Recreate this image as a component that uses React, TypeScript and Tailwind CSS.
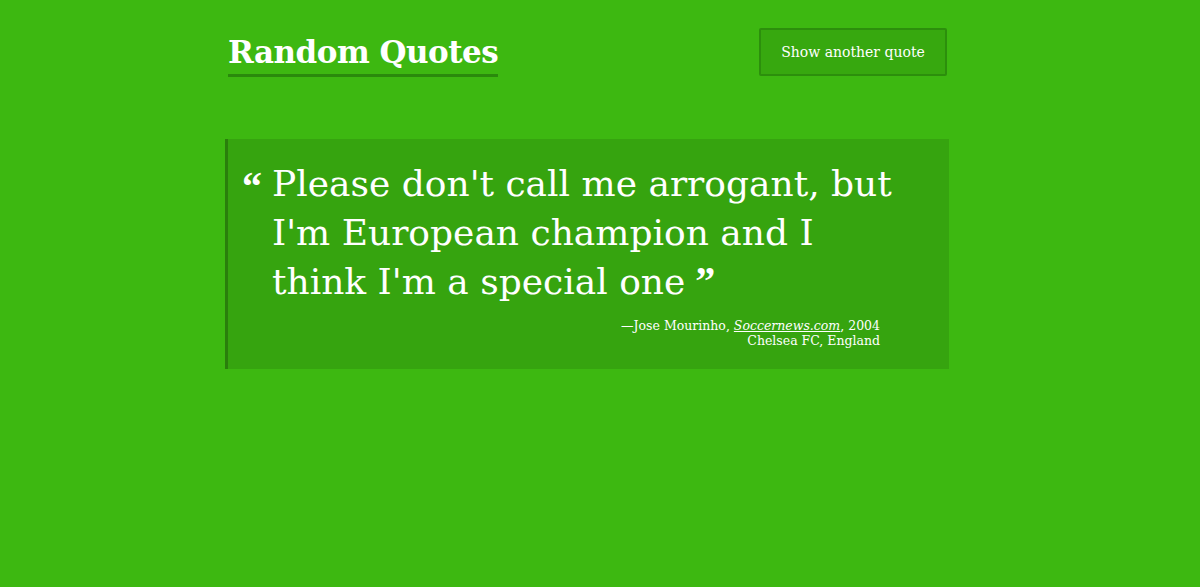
export default function App() {
    return (
        <div
            className="min-h-[587px] w-full bg-[#3db811] text-white"
            style={{ fontFamily: '"DejaVu Serif", "Liberation Serif", serif' }}
        >
            <div className="mx-auto w-[750px] pt-[28px]">

                <header className="flex w-[722px] items-start justify-between pl-[3px]">
                    <h1 className="mt-[5px] border-b-[3px] border-[#2a8a0c] pb-[3px] text-[31px] font-bold leading-[38px] tracking-[-0.5px]">
                        Random Quotes
                    </h1>

                    <button className="h-[48px] w-[188px] rounded-[2px] border-2 border-[#2c8f0c] bg-[#37a80f] text-[14px] text-white">
                        Show another quote
                    </button>
                </header>

                <blockquote className="mt-[62px] w-[724px] border-l-[3px] border-[#2a7f0c] bg-[#36a40f] pb-[21px] pl-[14px] pr-[44px] pt-[20px]">
                    <div className="flex">
                        <span className="mr-[10px] mt-[8px] font-['Liberation_Serif',serif] text-[40px] font-bold leading-[40px]">
                            &ldquo;
                        </span>
                        <p className="text-[36px] leading-[49px]">
                            Please don't call me arrogant, but I'm European
                            champion and I think I'm a special one
                            <span className="ml-[10px] font-['Liberation_Serif',serif] text-[40px] font-bold leading-[0px]">
                                &rdquo;
                            </span>
                        </p>
                    </div>

                    <footer className="mt-[12px] pr-[25px] text-right text-[12.5px] leading-[15px]">
                        &mdash;Jose Mourinho,{" "}
                        <a className="italic underline">Soccernews.com</a>, 2004
                        <br />
                        Chelsea FC, England
                    </footer>
                </blockquote>

            </div>
        </div>
    );
}
